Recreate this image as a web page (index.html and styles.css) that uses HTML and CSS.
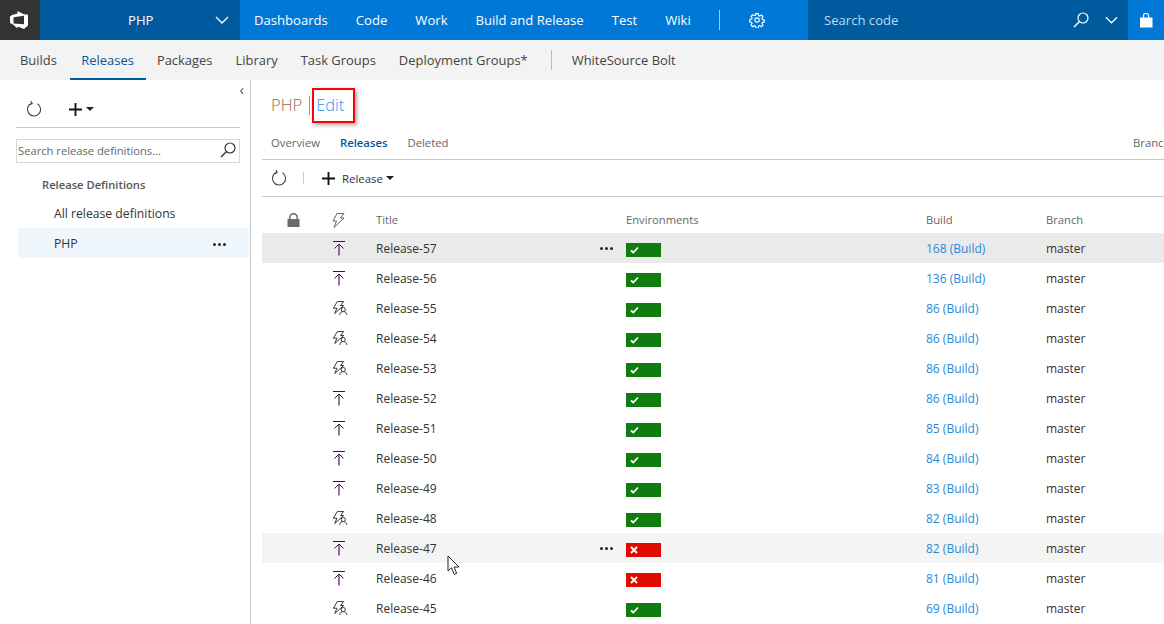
FILE: index.html
```html
<!DOCTYPE html>
<html lang="en">
<head>
<meta charset="utf-8">
<title>PHP - Releases</title>
<link rel="stylesheet" href="styles.css">
</head>
<body>
<svg class="defs" width="0" height="0" aria-hidden="true">
  <symbol id="manual" viewBox="1 1 16 16"><path d="M2 1.500h12" fill="none" stroke="#222" stroke-width="1"/><path d="M3.500 8.500 8 4l4.500 4.500" fill="none" stroke="#222" stroke-width="1"/><path d="M8 4.500V15.500" fill="none" stroke="#68217a" stroke-width="1.300"/></symbol>
  <symbol id="auto" viewBox="0 0 20 17.800"><path d="M6 .5h7L9.500 5H13L3 14l2.500-6H1.500z" fill="none" stroke="#333" stroke-width="1.100"/><circle cx="12.500" cy="9.500" r="2.300" fill="#fff" stroke="#333" stroke-width="1.100"/><path d="M8.500 15.500c.5-3 2-3.700 4-3.700s3.500.7 4 3.700" fill="#fff" stroke="#333" stroke-width="1.100"/></symbol>
  <symbol id="refresh" viewBox="0 0 16 16"><path d="M5.500 2.300A6.600 6.600 0 1 0 11.500 2.800" fill="none" stroke="currentColor" stroke-width="1.100"/><path d="M5 0 6.200 2.500 3 4" fill="none" stroke="currentColor" stroke-width="1.100"/></symbol>
  <symbol id="search" viewBox="0 0 16 16"><circle cx="10" cy="6" r="5" fill="none" stroke="currentColor" stroke-width="1.200"/><path d="M6.300 9.700 1 15" fill="none" stroke="currentColor" stroke-width="1.400"/></symbol>
  <symbol id="chev" viewBox="0 0 14 8"><path d="M1 1l6 6 6-6" fill="none" stroke="#fff" stroke-width="1.300"/></symbol>
  <symbol id="plus" viewBox="0 0 14 14"><path d="M7 0v14M0 7h14" fill="none" stroke="#111" stroke-width="2"/></symbol>
  <symbol id="check" viewBox="0 0 9 8"><path d="M1 4.500 3.200 6.500 8 1.500" fill="none" stroke="#fff" stroke-width="1.700"/></symbol>
  <symbol id="cross" viewBox="0 0 8 8"><path d="M1 1l6 6M7 1 1 7" fill="none" stroke="#fff" stroke-width="1.800"/></symbol>
</svg>

<header class="topbar">
  <div class="logo">
    <svg width="18" height="18" viewBox="0 0 18 18"><path fill-rule="evenodd" d="M7.500 0 14 3.200 18 3.800V14.500L14 18 7.500 15.500V17.500L3 13.500 0 12V5.500L2 4 7.500 2.500zM3.500 6.200V12.500L14 13.300V4.800z" fill="#fff"/></svg>
  </div>
  <div class="project">
    <span class="project-name">PHP</span>
    <svg class="project-chev" width="14" height="8"><use href="#chev"/></svg>
  </div>
  <nav class="mainnav">
    <a>Dashboards</a><a>Code</a><a>Work</a><a>Build and Release</a><a>Test</a><a>Wiki</a>
    <span class="nav-sep"></span>
    <svg class="gear" width="16" height="16" viewBox="0 0 16 16"><circle cx="8" cy="8" r="2.200" fill="none" stroke="#fff" stroke-width="1.200"/><path d="M6.700 1h2.600l.4 2 1.300.6 1.800-1.100 1.800 1.800-1.100 1.800.5 1.300 2 .4v2.400l-2 .4-.5 1.300 1.100 1.800-1.800 1.800-1.800-1.100-1.300.5-.4 2H6.700l-.4-2-1.300-.5-1.800 1.100-1.800-1.800 1.100-1.800-.5-1.300-2-.4V7.400l2-.4.500-1.300L1.400 3.900l1.800-1.800L5 3.200l1.300-.5z" transform="translate(.8 .8) scale(.9)" fill="none" stroke="#fff" stroke-width="1.300"/></svg>
  </nav>
  <div class="codesearch">
    <span class="codesearch-text">Search code</span>
    <svg class="codesearch-icon" width="16" height="16"><use href="#search"/></svg>
    <svg width="13" height="8"><use href="#chev"/></svg>
  </div>
  <div class="bag">
    <svg width="14" height="15" viewBox="0 0 14 15"><path d="M1 4.500h12.500V14.500H1z" fill="#fff"/><path d="M4.500 5V2.500C4.500 1 5.500.5 7 .5s2.500.5 2.500 2V5" fill="none" stroke="#fff" stroke-width="1.200"/></svg>
  </div>
</header>

<nav class="subnav">
  <a>Builds</a><a class="active">Releases</a><a>Packages</a><a>Library</a><a>Task Groups</a><a>Deployment Groups*</a>
  <span class="subnav-sep"></span>
  <a>WhiteSource Bolt</a>
</nav>

<div class="content">
  <aside class="sidebar">
    <span class="collapse">‹</span>
    <div class="side-tools">
      <svg class="side-refresh" width="16" height="16"><use href="#refresh"/></svg>
      <svg class="side-plus" width="13" height="13"><use href="#plus"/></svg>
      <span class="caret"></span>
    </div>
    <div class="side-search">
      <span>Search release definitions...</span>
      <svg width="16" height="16"><use href="#search"/></svg>
    </div>
    <div class="side-head">Release Definitions</div>
    <div class="side-item">All release definitions</div>
    <div class="side-item selected">PHP<span class="dots"><i></i><i></i><i></i></span></div>
  </aside>

  <main class="main">
    <div class="title-row">
      <h1>PHP</h1><span class="title-sep"></span><a class="edit">Edit</a>
    </div>
    <div class="tabs">
      <div class="tabs-left"><a>Overview</a><a class="active">Releases</a><a>Deleted</a></div>
      <a class="branch">Branch</a>
    </div>
    <div class="toolbar">
      <svg class="tool-refresh" width="16" height="16"><use href="#refresh"/></svg>
      <span class="tool-sep"></span>
      <svg class="tool-plus" width="13" height="13"><use href="#plus"/></svg>
      <span class="tool-label">Release</span>
      <span class="caret"></span>
    </div>

    <div class="table">
      <div class="row head">
        <span></span>
        <span class="cell-icon"><svg width="13" height="14" viewBox="0 0 13 14"><path d="M2.800 6.500V4.500a3.700 3.700 0 0 1 7.400 0v2" fill="none" stroke="#6a6a6a" stroke-width="1.500"/><path d="M.5 6h12v8H.5z" fill="#6a6a6a"/></svg></span>
        <span class="cell-icon"><svg width="13" height="15" viewBox="0 0 13 15"><path d="M5 .5h7L8.500 5H12L2 14.500 4.500 8H1z" fill="none" stroke="#666" stroke-width="1"/></svg></span>
        <span>Title</span><span>Environments</span><span>Build</span><span>Branch</span>
      </div>
      <div class="row current"><span></span><span class="cell-icon"></span><span class="cell-icon"><svg width="16" height="16"><use href="#manual"/></svg></span><span class="title-cell">Release-57<span class="dots"><i></i><i></i><i></i></span></span><span><b class="env ok"><svg width="9" height="8"><use href="#check"/></svg></b></span><span><a>168 (Build)</a></span><span>master</span></div>
      <div class="row"><span></span><span class="cell-icon"></span><span class="cell-icon"><svg width="16" height="16"><use href="#manual"/></svg></span><span class="title-cell">Release-56</span><span><b class="env ok"><svg width="9" height="8"><use href="#check"/></svg></b></span><span><a>136 (Build)</a></span><span>master</span></div>
      <div class="row"><span></span><span class="cell-icon"></span><span class="cell-icon"><svg width="18" height="16"><use href="#auto"/></svg></span><span class="title-cell">Release-55</span><span><b class="env ok"><svg width="9" height="8"><use href="#check"/></svg></b></span><span><a>86 (Build)</a></span><span>master</span></div>
      <div class="row"><span></span><span class="cell-icon"></span><span class="cell-icon"><svg width="18" height="16"><use href="#auto"/></svg></span><span class="title-cell">Release-54</span><span><b class="env ok"><svg width="9" height="8"><use href="#check"/></svg></b></span><span><a>86 (Build)</a></span><span>master</span></div>
      <div class="row"><span></span><span class="cell-icon"></span><span class="cell-icon"><svg width="18" height="16"><use href="#auto"/></svg></span><span class="title-cell">Release-53</span><span><b class="env ok"><svg width="9" height="8"><use href="#check"/></svg></b></span><span><a>86 (Build)</a></span><span>master</span></div>
      <div class="row"><span></span><span class="cell-icon"></span><span class="cell-icon"><svg width="16" height="16"><use href="#manual"/></svg></span><span class="title-cell">Release-52</span><span><b class="env ok"><svg width="9" height="8"><use href="#check"/></svg></b></span><span><a>86 (Build)</a></span><span>master</span></div>
      <div class="row"><span></span><span class="cell-icon"></span><span class="cell-icon"><svg width="16" height="16"><use href="#manual"/></svg></span><span class="title-cell">Release-51</span><span><b class="env ok"><svg width="9" height="8"><use href="#check"/></svg></b></span><span><a>85 (Build)</a></span><span>master</span></div>
      <div class="row"><span></span><span class="cell-icon"></span><span class="cell-icon"><svg width="16" height="16"><use href="#manual"/></svg></span><span class="title-cell">Release-50</span><span><b class="env ok"><svg width="9" height="8"><use href="#check"/></svg></b></span><span><a>84 (Build)</a></span><span>master</span></div>
      <div class="row"><span></span><span class="cell-icon"></span><span class="cell-icon"><svg width="16" height="16"><use href="#manual"/></svg></span><span class="title-cell">Release-49</span><span><b class="env ok"><svg width="9" height="8"><use href="#check"/></svg></b></span><span><a>83 (Build)</a></span><span>master</span></div>
      <div class="row"><span></span><span class="cell-icon"></span><span class="cell-icon"><svg width="18" height="16"><use href="#auto"/></svg></span><span class="title-cell">Release-48</span><span><b class="env ok"><svg width="9" height="8"><use href="#check"/></svg></b></span><span><a>82 (Build)</a></span><span>master</span></div>
      <div class="row hover"><span></span><span class="cell-icon"></span><span class="cell-icon"><svg width="16" height="16"><use href="#manual"/></svg></span><span class="title-cell">Release-47<span class="dots"><i></i><i></i><i></i></span></span><span><b class="env fail"><svg width="8" height="8"><use href="#cross"/></svg></b></span><span><a>82 (Build)</a></span><span>master</span></div>
      <div class="row"><span></span><span class="cell-icon"></span><span class="cell-icon"><svg width="16" height="16"><use href="#manual"/></svg></span><span class="title-cell">Release-46</span><span><b class="env fail"><svg width="8" height="8"><use href="#cross"/></svg></b></span><span><a>81 (Build)</a></span><span>master</span></div>
      <div class="row"><span></span><span class="cell-icon"></span><span class="cell-icon"><svg width="18" height="16"><use href="#auto"/></svg></span><span class="title-cell">Release-45</span><span><b class="env ok"><svg width="9" height="8"><use href="#check"/></svg></b></span><span><a>69 (Build)</a></span><span>master</span></div>
    </div>
  </main>
</div>

<div class="annotation"></div>
<svg class="pointer" width="14" height="21" viewBox="0 0 14 21"><path d="M1 1v15l3.500-3.200 2.700 6.500 2.500-1-2.700-6.300H12z" fill="#fff" stroke="#222" stroke-width="1"/></svg>
</body>
</html>
```
FILE: styles.css
```css
* { box-sizing: border-box; }
html, body { margin: 0; height: 624px; overflow: hidden; background: #fff; }
body { font: 12px/16px "Open Sans", "Noto Sans", sans-serif; color: #333; position: relative; }
a { color: inherit; text-decoration: none; }
.defs { position: absolute; }
svg { display: block; flex: none; }

.topbar { display: flex; height: 40px; background: #0078d7; color: #fff; font-size: 13.100px; }
.logo { width: 40px; background: #333; display: flex; align-items: center; justify-content: center; padding-right: 2px; }
.project { width: 200px; background: #005a9e; display: flex; align-items: center; }
.project-name { margin-left: 88px; }
.project-chev { margin-left: auto; margin-right: 11px; }
.mainnav { width: 568px; flex: none; display: flex; align-items: center; padding-left: 14px; }
.mainnav a { margin-right: 28px; white-space: nowrap; }
.nav-sep { width: 1px; height: 20px; background: #9cc9ef; }
.gear { margin-left: 29px; }
.codesearch { width: 320px; flex: none; background: #005a9e; display: flex; align-items: center; padding: 0 10px 0 16px; }
.codesearch-text { flex: 1; color: #b6dcf6; }
.codesearch-icon { margin-right: 16px; }
.bag { flex: 1; display: flex; align-items: center; justify-content: center; padding-right: 1px; }

.subnav { display: flex; align-items: center; height: 40px; background: #f3f3f3; padding-left: 9px; font-size: 12.950px; color: #444; }
.subnav a { padding: 0 11px; margin-right: 1px; height: 40px; line-height: 40px; white-space: nowrap; }
.subnav a:first-child { margin-right: 2.400px; }
.subnav a.active { color: #005a9e; border-bottom: 2px solid #005a9e; padding-right: 12px; margin-right: 0; }
.subnav-sep { width: 1px; height: 20px; background: #bbb; margin: 0 9px 0 11px; }

.content { display: flex; height: 544px; }
.sidebar { width: 251px; flex: none; border-right: 1px solid #c8c8c8; padding-left: 16px; position: relative; }
.collapse { position: absolute; right: 6px; top: 0; font-size: 15px; line-height: 18px; color: #555; }
.side-tools { display: flex; align-items: center; height: 48px; margin-right: 10px; padding: 10px 0 0 10px; border-bottom: 1px solid #c8c8c8; }
.side-refresh { color: #444; }
.side-plus { margin-left: 26px; margin-top: 1px; position: relative; left: 1px; }
.caret { display: inline-block; width: 0; height: 0; border: 4px solid transparent; border-top-color: #222; border-bottom: 0; }
.side-tools .caret { margin-left: 5px; }
.side-search { display: flex; align-items: center; justify-content: space-between; height: 24px; margin: 11px 10px 0 0; border: 1px solid #d8d8d8; padding: 0 3px 0 1px; font-size: 11.200px; color: #666; }
.side-search svg { color: #333; margin-top: -3px; }
.side-head { margin: 11px 0 0 26px; height: 21px; line-height: 21px; font-weight: 600; font-size: 11.200px; color: #555; }
.side-item { display: flex; justify-content: space-between; align-items: center; height: 30px; margin-left: 2px; padding: 2px 23px 0 36px; font-size: 12.200px; color: #333; }
.side-head + .side-item { margin-top: 3px; }
.side-item.selected { background: #eff6fc; width: 231px; }
.dots { display: inline-flex; gap: 2px; }
.dots i { width: 3px; height: 3px; border-radius: 50%; background: #222; }

.main { flex: 1; min-width: 0; padding-left: 11px; overflow: hidden; }
.title-row { display: flex; align-items: center; height: 50px; padding-left: 9px; font-size: 16.500px; font-weight: 300; }
.title-row h1 { margin: 0; font: inherit; color: #8a6a4a; }
.title-sep { width: 1px; height: 19px; margin: 0 6px 0 7px; background: #999; }
.edit { color: #2b9aec; }
.tabs { display: flex; align-items: center; height: 30px; padding: 0 0 3px 9px; border-bottom: 1px solid #c8c8c8; white-space: nowrap; overflow: hidden; color: #666; font-size: 11.300px; }
.tabs-left { flex: 0 0 862px; display: flex; gap: 20px; }
.tabs-left .active { color: #005a9e; font-weight: 600; }
.branch { flex: none; }
.toolbar { display: flex; align-items: center; height: 37px; padding-left: 9px; border-bottom: 1px solid #c8c8c8; }
.tool-refresh { color: #444; }
.tool-sep { width: 1px; height: 12px; background: #ccc; margin: 0 18px 0 16px; }
.tool-label { margin: 2px 3px 0 7px; font-size: 11.400px; }
.table { padding-top: 10px; }
.row { display: grid; grid-template-columns: 25px 45px 44px 250px 300px 120px 1fr; align-items: center; height: 30px; padding-top: 1px; white-space: nowrap; }
.row.head { height: 26px; padding-top: 0; color: #666; font-size: 11.200px; }
.row.current { background: #eaeaea; }
.row.hover { background: #f4f4f4; }
.title-cell { display: flex; justify-content: space-between; align-items: center; padding-right: 13px; }
.cell-icon { display: flex; }
.row a { color: #2b88d8; }
.env { display: flex; align-items: center; width: 35px; height: 14px; padding-left: 4px; margin-top: 2px; }
.env.ok { background: #107c10; }
.env.fail { background: #e00b00; }

.annotation { position: absolute; left: 312px; top: 88px; width: 43px; height: 35px; border: 2px solid #f00; box-shadow: 2px 2px 4px rgba(0,0,0,.35); }
.pointer { position: absolute; left: 447px; top: 555px; }
```
